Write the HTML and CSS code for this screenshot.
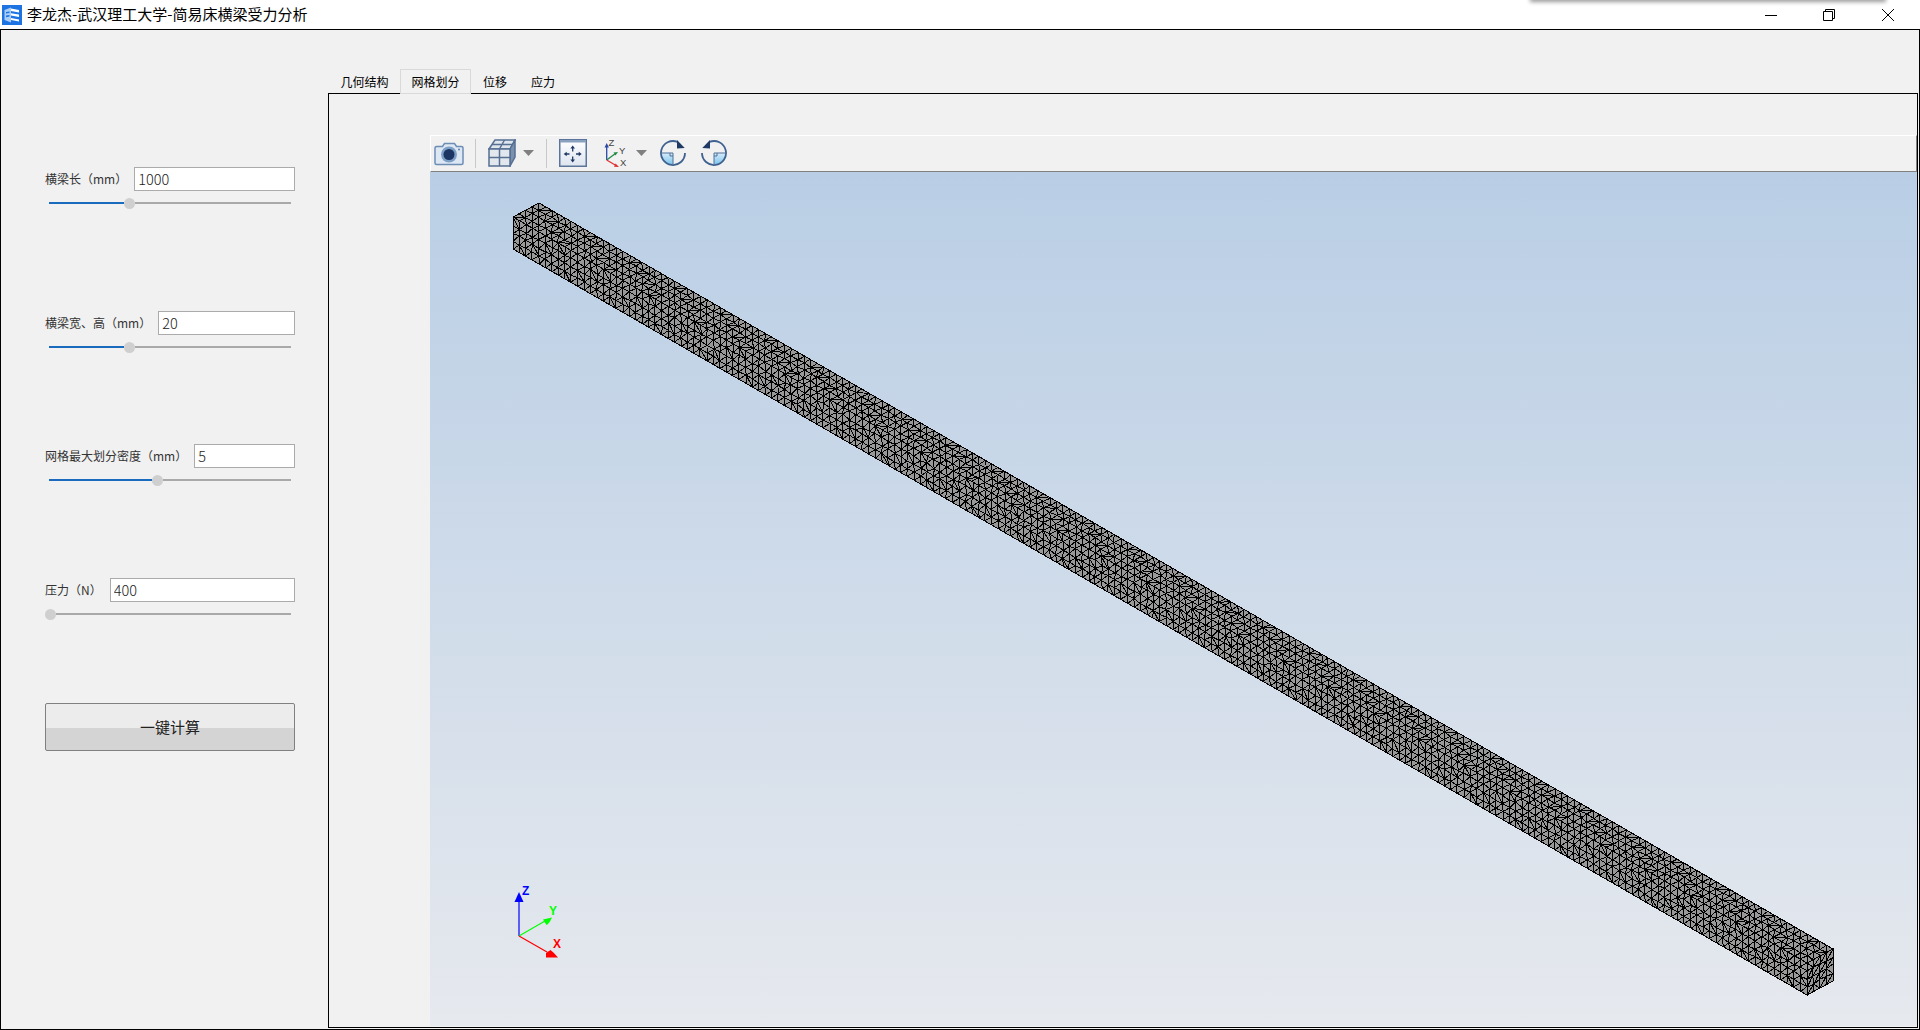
FILE: index.html
```html
<!DOCTYPE html>
<html lang="zh-CN">
<head>
<meta charset="utf-8">
<title>李龙杰-武汉理工大学-简易床横梁受力分析</title>
<link rel="stylesheet" href="styles.css">
</head>
<body>
<header class="titlebar">
  <svg class="app-icon" viewBox="0 0 20 20" width="20" height="20">
    <rect width="20" height="20" fill="#1d73e2"/>
    <path d="M2.500 5 9 2.500v15L2.500 15z" fill="#a9cdf7"/>
    <path d="M9 3.500 17 5v2.400L9 6zM9 8.200l8 1.400V12L9 10.600zM9 13l8 1.400v2L9 15z" fill="#fff"/>
    <path d="M4 7l3.500-.6v1.600L4 8.600zM4 10.600l3.500-.6v1.600l-3.500.6z" fill="#1d73e2"/>
  </svg>
  <span class="app-title">李龙杰-武汉理工大学-简易床横梁受力分析</span>
  <div class="window-buttons">
    <span class="window-button"><svg viewBox="0 0 14 14" width="14" height="14"><path d="M1 7.500h12" stroke="#000" fill="none"/></svg></span>
    <span class="window-button"><svg viewBox="0 0 14 14" width="14" height="14"><path d="M1.500 3.500h9v9h-9zM3.500 3.500v-2h9v9h-2" stroke="#000" fill="none"/></svg></span>
    <span class="window-button"><svg viewBox="0 0 14 14" width="14" height="14"><path d="M1 1l12 12M13 1 1 13" stroke="#000" fill="none"/></svg></span>
  </div>
  <div class="other-window-shadow"></div>
</header>

<main class="window">
  <aside class="sidebar">
    <section class="field">
      <div class="field-row"><label class="field-label">横梁长（mm）</label><input class="field-input" value="1000"></div>
      <div class="slider"><div class="slider-fill" style="width:75px"></div><div class="slider-knob"></div><div class="slider-rest"></div></div>
    </section>
    <section class="field">
      <div class="field-row"><label class="field-label">横梁宽、高（mm）</label><input class="field-input" value="20"></div>
      <div class="slider"><div class="slider-fill" style="width:75px"></div><div class="slider-knob"></div><div class="slider-rest"></div></div>
    </section>
    <section class="field">
      <div class="field-row"><label class="field-label">网格最大划分密度（mm）</label><input class="field-input" value="5"></div>
      <div class="slider"><div class="slider-fill" style="width:103px"></div><div class="slider-knob"></div><div class="slider-rest"></div></div>
    </section>
    <section class="field">
      <div class="field-row"><label class="field-label field-label-short">压力（N）</label><input class="field-input" value="400"></div>
      <div class="slider"><div class="slider-knob slider-knob-start"></div><div class="slider-rest"></div></div>
    </section>
    <button class="compute-button">一键计算</button>
  </aside>

  <section class="tabs">
    <nav class="tab-bar">
      <span class="tab tab-wide">几何结构</span>
      <span class="tab tab-wide tab-active">网格划分</span>
      <span class="tab">位移</span>
      <span class="tab">应力</span>
    </nav>
    <div class="tab-pane">
      <div class="viewer">
        <div class="toolbar">
          <svg class="tool tool-camera" viewBox="0 0 30 26" width="30" height="26">
            <path d="M2.500 6.500h6l2-3h10l2 3h5q1.500 0 1.500 1.500v15q0 1.500-1.500 1.500h-25Q1 24.500 1 23V8q0-1.500 1.500-1.500z" fill="#dde8f4" stroke="#6d8db5" stroke-width="1.500"/>
            <circle cx="15" cy="14.500" r="8" fill="#7d9fc6"/>
            <circle cx="15" cy="14.500" r="5.500" fill="#1c3563"/>
            <circle cx="25" cy="9.500" r="1" fill="#5f82ad"/>
          </svg>
          <span class="tool-separator tool-separator-first"></span>
          <svg class="tool tool-cube" viewBox="0 0 28 28" width="28" height="28">
            <path d="M1 10 7 1h20l-5 9z" fill="#dfe5ec" stroke="#566f93" stroke-width="1.500"/>
            <path d="M22 10l5-9v17l-5 9z" fill="#7b90ad" stroke="#566f93" stroke-width="1.500"/>
            <path d="M1 10h21v17H1z" fill="#e2e7ee" stroke="#566f93" stroke-width="1.500"/>
            <path d="M11.500 10v17M1 18.500h21M11.500 10l5-9M4 5.500h21" fill="none" stroke="#566f93" stroke-width="1.500"/>
          </svg>
          <svg class="tool tool-arrow" viewBox="0 0 11 6" width="11" height="6"><path d="M0 0h11L5.500 6z" fill="#808080"/></svg>
          <span class="tool-separator tool-separator-next"></span>
          <svg class="tool tool-fit" viewBox="0 0 28 28" width="28" height="28">
            <defs><linearGradient id="fit-bg" x1="0" y1="0" x2="0" y2="1"><stop offset="0" stop-color="#fff"/><stop offset="1" stop-color="#dde5ef"/></linearGradient></defs>
            <rect x=".75" y=".75" width="26.500" height="26.500" fill="url(#fit-bg)" stroke="#5b7499" stroke-width="1.500"/>
            <rect x="1" y="1" width="26" height="2.500" fill="#8aa0bf"/>
            <path d="M13.700 9v3.500M13.700 17.500v3.500M7 15h3.500M17 15h3.500" stroke="#1f3864" stroke-width="1.300" fill="none"/>
            <path d="M13.700 6.500l-2.300 3h4.600zM13.700 23.500l-2.300-3h4.600zM4.700 15l3-2.300v4.600zM22.700 15l-3-2.300v4.600z" fill="#1f3864"/>
          </svg>
          <svg class="tool tool-axes" viewBox="0 -2 26 32" width="26" height="32">
            <path d="M3.700 21V7" stroke="#2a4aa8" stroke-width="1.300" fill="none"/>
            <path d="M3.700 21 12.500 14.500" stroke="#1f8a45" stroke-width="1.300" fill="none"/>
            <path d="M3.700 21 13 26.500" stroke="#e02f2f" stroke-width="1.300" fill="none"/>
            <path d="M3.700 4 1.500 8.500h4.400z" fill="#2a4aa8"/>
            <path d="M15 13l-4.500.6 2 3z" fill="#1f8a45"/>
            <path d="M16 28l-5-.2 1.600-3.200z" fill="#e02f2f"/>
            <text class="tool-axis-label" x="5.500" y="6.500">Z</text>
            <text class="tool-axis-label" x="16" y="14.500">Y</text>
            <text class="tool-axis-label" x="17" y="27">X</text>
          </svg>
          <svg class="tool tool-arrow tool-arrow-axes" viewBox="0 0 11 6" width="11" height="6"><path d="M0 0h11L5.500 6z" fill="#808080"/></svg>
          <svg class="tool tool-rotate" viewBox="0 0 28 28" width="28" height="28">
            <defs><linearGradient id="quadrant" x1="0" y1="0" x2="0" y2="1"><stop offset="0" stop-color="#d8ecfa"/><stop offset="1" stop-color="#7cc4ec"/></linearGradient></defs>
            <path d="M14 14H2.500A11.500 11.500 0 0 0 14 25.500z" fill="url(#quadrant)"/>
            <path d="M26 14A12 12 0 1 1 18.500 2.900" fill="none" stroke="#3f6190" stroke-width="1.800"/>
            <path d="M2 14h12v12M11 14v3h3" fill="none" stroke="#4f7099" stroke-width="1"/>
            <path d="M18 1 25.700 9 18 9.500z" fill="#1f3864"/>
          </svg>
          <svg class="tool tool-rotate tool-rotate-back" viewBox="0 0 28 28" width="28" height="28">
            <g transform="matrix(-1 0 0 1 28 0)">
              <path d="M14 14H2.500A11.500 11.500 0 0 0 14 25.500z" fill="url(#quadrant)"/>
              <path d="M26 14A12 12 0 1 1 18.500 2.900" fill="none" stroke="#3f6190" stroke-width="1.800"/>
              <path d="M2 14h12v12M11 14v3h3" fill="none" stroke="#4f7099" stroke-width="1"/>
              <path d="M18 1 25.700 9 18 9.500z" fill="#1f3864"/>
            </g>
          </svg>
        </div>
        <div class="canvas">
          <svg class="scene" viewBox="430 172 1486 854" width="1486" height="854">
            <g id="beam"></g>
            <g class="triad">
              <path d="M519 936V900" stroke="#0000ff" stroke-width="1.200" fill="none"/>
              <path d="M519 892l-4.500 10h9z" fill="#0000ff"/>
              <path d="M519 936 545 921" stroke="#00ff00" stroke-width="1.200" fill="none"/>
              <path d="M552 917.500l-9 2 3.500 5.500q3-1.500 5.500-7.500z" fill="#00ff00"/>
              <path d="M519 936 547 952" stroke="#ff0000" stroke-width="1.200" fill="none"/>
              <path d="M558 957.500h-12v-4.500l4.500-3q4 3 7.500 7.500z" fill="#ff0000"/>
              <text class="triad-label triad-z" x="522" y="895">Z</text>
              <text class="triad-label triad-y" x="549" y="915">Y</text>
              <text class="triad-label triad-x" x="553" y="948">X</text>
            </g>
          </svg>
        </div>
      </div>
    </div>
  </section>
</main>
<script src="mesh.js"></script>
</body>
</html>
```
FILE: styles.css
```css
html, body {
  margin: 0;
  height: 1030px;
  overflow: hidden;
  background: #fff;
}
body {
  display: flex;
  flex-direction: column;
  font-family: "Noto Sans CJK SC", "Liberation Sans", sans-serif;
  color: #000;
}

/* title bar */
.titlebar {
  position: relative;
  display: flex;
  align-items: center;
  height: 29px;
  padding-left: 2px;
  box-sizing: border-box;
  flex: none;
  overflow: hidden;
}
.app-icon { flex: none; margin-right: 5px; }
.app-title { font-size: 15px; line-height: 20px; margin-bottom: 2px; }
.window-buttons {
  display: flex;
  margin-left: auto;
  padding-right: 3px;
}
.window-button {
  display: flex;
  align-items: center;
  justify-content: center;
  width: 58.500px;
  height: 28px;
}
.other-window-shadow {
  position: absolute;
  top: -6px;
  left: 1530px;
  width: 356px;
  height: 6px;
  box-shadow: 0 2px 4px rgba(0, 0, 0, .4);
}

/* window */
.window {
  flex: none;
  display: flex;
  height: 1001px;
  box-sizing: border-box;
  border: 1px solid #000;
  background: #f1f1f1;
}

/* sidebar */
.sidebar {
  flex: none;
  width: 327px;
  box-sizing: border-box;
  padding: 137px 33px 0 44px;
  display: grid;
  grid-template-columns: 250px;
  grid-template-rows: 144px 133px 134px 125px 48px;
  align-items: start;
}
.field-row {
  display: flex;
  align-items: center;
  gap: 7px;
  height: 24px;
}
.field-label {
  font-size: 12px;
  padding-bottom: 2px;
  color: #333;
  white-space: nowrap;
}
.field-label-short { margin-right: 1px; }
.field-input {
  flex: 1;
  min-width: 0;
  height: 24px;
  box-sizing: border-box;
  border: 1px solid #ababab;
  background: #fff;
  padding: 0 3px 1px;
  font: 300 14.500px "Noto Sans CJK SC", "Liberation Sans", sans-serif;
  color: #222;
  outline: none;
  border-radius: 0;
}
.slider {
  display: flex;
  align-items: center;
  height: 12px;
  margin: 6px 4px 0;
}
.slider-fill {
  height: 2px;
  background: #1a6bbd;
  flex: none;
}
.slider-rest {
  flex: 1;
  height: 2px;
  background: #a9a9a9;
}
.slider-knob {
  flex: none;
  width: 11px;
  height: 11px;
  border-radius: 50%;
  background: #cfcfcf;
}
.slider-knob-start { margin-left: -4px; }
.compute-button {
  height: 48px;
  width: 100%;
  padding: 0 0 2px;
  box-sizing: border-box;
  border: 1px solid #808080;
  border-radius: 2px;
  background: linear-gradient(#ececec 0, #ececec 24px, #d4d4d4 24px, #d4d4d4 100%);
  font: 15px "Noto Sans CJK SC", "Liberation Sans", sans-serif;
  color: #222;
}

/* tabs */
.tabs {
  display: flex;
  flex-direction: column;
  width: 1590px;
  height: 998px;
  flex: none;
}
.tab-bar {
  display: flex;
  align-items: flex-end;
  height: 63px;
  padding-left: 1px;
  flex: none;
}
.tab {
  width: 48px;
  height: 25px;
  margin-bottom: -1px;
  box-sizing: border-box;
  display: flex;
  align-items: center;
  justify-content: center;
  font-size: 12px;
  border: 1px solid transparent;
  position: relative;
  z-index: 1;
}
.tab-wide { width: 71px; }
.tab-active { border-color: #d9d9d9; background: #f1f1f1; }
.tab-pane {
  flex: 1;
  box-sizing: border-box;
  border: 1px solid #000;
  padding: 41px 0 1px 101px;
  display: flex;
  min-height: 0;
}
.viewer {
  flex: 1;
  display: flex;
  flex-direction: column;
  min-width: 0;
}

/* toolbar */
.toolbar {
  flex: none;
  height: 37px;
  box-sizing: border-box;
  display: flex;
  align-items: center;
  padding-bottom: 1px;
  background: #f1f1f1;
  border-style: solid;
  border-width: 1px;
  border-color: #fff #808080 #808080 #fff;
}
.tool { flex: none; }
.tool-camera { margin-left: 3px; }
.tool-separator {
  flex: none;
  width: 1px;
  height: 29px;
  background: #c8c8c8;
}
.tool-separator-first { margin-left: 11px; }
.tool-separator-next { margin-left: 12px; }
.tool-cube { margin-left: 12px; }
.tool-arrow { margin-left: 7px; }
.tool-fit { margin-left: 12px; }
.tool-axes { margin-left: 16px; }
.tool-arrow-axes { margin-left: 7px; }
.tool-rotate { margin-left: 12px; }
.tool-rotate-back { margin-left: 13px; }
.tool-axis-label {
  font: 9.500px "Liberation Sans", sans-serif;
  fill: #444;
}

/* 3D canvas */
.canvas {
  flex: 1;
  min-height: 0;
  background: linear-gradient(#b9cee5, #e6e9ee);
  overflow: hidden;
}
.scene { display: block; }
.mesh-face {
  fill: #999;
  stroke: #000;
  stroke-width: 1;
  shape-rendering: crispEdges;
}
.mesh-lines {
  fill: none;
  stroke: #000;
  stroke-width: 1;
  shape-rendering: crispEdges;
}
.triad-label {
  font: bold 12px "Liberation Sans", sans-serif;
}
.triad-z { fill: #0000ff; }
.triad-y { fill: #00ff00; }
.triad-x { fill: #ff0000; }
```
FILE: mesh.js
```javascript
// Draws the surface mesh of the beam: three faces, each a lightly jittered triangular lattice.
(function () {
  var NS = 'http://www.w3.org/2000/svg';
  var beam = document.getElementById('beam');

  function jitter(a, b, c) {
    var s = Math.sin(a * 12.9898 + b * 78.233 + c * 37.719) * 43758.5453;
    return (s - Math.floor(s)) - 0.5;
  }

  function face(o, u, v, nu, nv, id) {
    var pts = [];
    for (var i = 0; i <= nu; i++) {
      pts[i] = [];
      for (var j = 0; j <= nv; j++) {
        var a = i / nu, b = j / nv;
        var ja = (i > 0 && i < nu) ? jitter(i % 13, j, id) * 0.25 / nu : 0;
        var jb = (j > 0 && j < nv) ? jitter(j, i % 13, id + 5) * 0.25 / nv : 0;
        pts[i][j] = [
          o[0] + u[0] * (a + ja) + v[0] * (b + jb),
          o[1] + u[1] * (a + ja) + v[1] * (b + jb)
        ];
      }
    }
    function seg(p, q) {
      return 'M' + p[0].toFixed(1) + ' ' + p[1].toFixed(1) + 'L' + q[0].toFixed(1) + ' ' + q[1].toFixed(1);
    }
    var d = '';
    for (i = 0; i <= nu; i++) {
      for (j = 0; j <= nv; j++) {
        if (i < nu) d += seg(pts[i][j], pts[i + 1][j]);
        if (j < nv) d += seg(pts[i][j], pts[i][j + 1]);
        if (i < nu && j < nv) {
          d += (i * 5 + j * 3) % 7 === 0
            ? seg(pts[i][j], pts[i + 1][j + 1])
            : seg(pts[i + 1][j], pts[i][j + 1]);
        }
      }
    }
    var poly = document.createElementNS(NS, 'polygon');
    poly.setAttribute('class', 'mesh-face');
    poly.setAttribute('points', [
      o, [o[0] + u[0], o[1] + u[1]], [o[0] + u[0] + v[0], o[1] + u[1] + v[1]], [o[0] + v[0], o[1] + v[1]]
    ].map(function (p) { return p.join(','); }).join(' '));
    beam.appendChild(poly);
    var lines = document.createElementNS(NS, 'path');
    lines.setAttribute('class', 'mesh-lines');
    lines.setAttribute('d', d);
    beam.appendChild(lines);
  }

  face([513, 217], [1294, 746], [26, -14], 200, 4, 1);
  face([513, 217], [1294, 746], [0, 32], 200, 4, 2);
  face([1807, 963], [26, -14], [0, 32], 4, 4, 3);
})();
```
